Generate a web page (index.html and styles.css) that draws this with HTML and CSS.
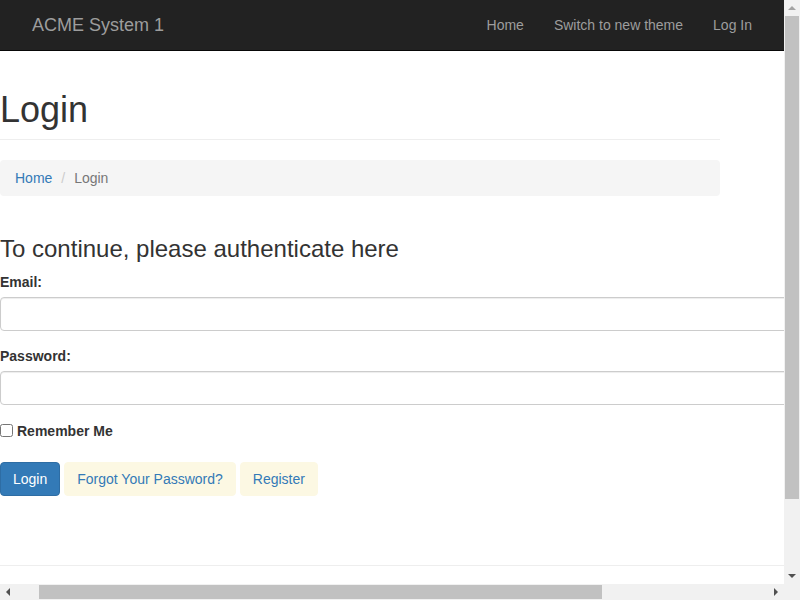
FILE: index.html
```html
<!DOCTYPE html>
<html lang="en">
<head>
<meta charset="utf-8">
<title>Login - ACME System 1</title>
<link rel="stylesheet" href="styles.css">
</head>
<body>
<nav class="navbar">
  <a class="brand" href="#">ACME System 1</a>
  <ul class="nav">
    <li><a href="#">Home</a></li>
    <li><a href="#">Switch to new theme</a></li>
    <li><a href="#">Log In</a></li>
  </ul>
</nav>
<main class="page">
  <h1 class="page-title">Login</h1>
  <ol class="breadcrumb">
    <li><a href="#">Home</a></li>
    <li class="active">Login</li>
  </ol>
  <form class="login-form">
    <h3 class="form-title">To continue, please authenticate here</h3>
    <div class="form-group email-group">
      <label class="field-label" for="email">Email:</label>
      <input class="form-control" id="email" type="email">
    </div>
    <div class="form-group password-group">
      <label class="field-label" for="password">Password:</label>
      <input class="form-control" id="password" type="password">
    </div>
    <label class="remember"><input type="checkbox" class="check"><span>Remember Me</span></label>
    <div class="actions">
      <button type="button" class="btn btn-primary">Login</button>
      <a class="btn btn-soft" href="#">Forgot Your Password?</a>
      <a class="btn btn-soft" href="#">Register</a>
    </div>
  </form>
  <footer class="footer"></footer>
</main>
<div class="vscroll" aria-hidden="true">
  <span class="arrow arrow-up"></span>
  <span class="vthumb"></span>
  <span class="arrow arrow-down"></span>
</div>
<div class="hscroll" aria-hidden="true">
  <span class="arrow arrow-left"></span>
  <span class="hthumb"></span>
  <span class="arrow arrow-right"></span>
</div>
<div class="scroll-corner" aria-hidden="true"></div>
</body>
</html>
```
FILE: styles.css
```css
* { box-sizing: border-box; }
html { overflow: hidden; }
html, body { margin: 0; padding: 0; }
body {
  font-family: "Liberation Sans", Arial, Helvetica, sans-serif;
  font-size: 14px;
  line-height: 20px;
  color: #333;
  background: #fff;
}
a { color: #337ab7; text-decoration: none; }

.navbar {
  position: fixed;
  top: 0; left: 0; right: 16px;
  z-index: 10;
  height: 51px;
  background: #222;
  border-bottom: 1px solid #080808;
  display: flex;
  align-items: flex-start;
  justify-content: space-between;
  padding: 0 17px;
}
.brand {
  display: block;
  padding: 15px;
  font-size: 18px;
  line-height: 20px;
  color: #9d9d9d;
}
.nav {
  display: flex;
  list-style: none;
  margin: 0;
  padding: 0;
}
.nav a {
  display: block;
  padding: 15px;
  line-height: 20px;
  color: #9d9d9d;
}

.page {
  width: 1015px;
  padding: 90px 15px 101px 0;
  display: flex;
  flex-direction: column;
  align-items: flex-start;
}
.page-title {
  width: 720px;
  margin: 0;
  font-size: 36px;
  line-height: 40px;
  font-weight: 500;
  padding-bottom: 9px;
  border-bottom: 1px solid #eee;
}
.breadcrumb {
  width: 720px;
  margin: 20px 0 0;
  padding: 8px 15px;
  list-style: none;
  background: #f5f5f5;
  border-radius: 4px;
  display: flex;
}
.breadcrumb li + li { margin-left: 4px; }
.breadcrumb li + li::before {
  content: "/\00a0";
  padding: 0 5px;
  color: #ccc;
}
.breadcrumb .active { color: #777; }

.login-form {
  width: 1000px;
  margin-top: 40px;
  display: flex;
  flex-direction: column;
}
.form-title {
  margin: 0;
  font-size: 24px;
  line-height: 26px;
  font-weight: 500;
}
.form-group { display: flex; flex-direction: column; align-items: flex-start; }
.email-group { margin-top: 10px; }
.password-group { margin-top: 15px; }
.field-label {
  font-weight: bold;
  margin-bottom: 5px;
}
.form-control {
  width: 100%;
  height: 34px;
  padding: 6px 12px;
  font: inherit;
  color: #555;
  background: #fff;
  border: 1px solid #ccc;
  border-radius: 4px;
  box-shadow: inset 0 1px 1px rgba(0,0,0,.075);
}
.remember {
  margin-top: 16px;
  display: flex;
  align-items: flex-start;
  gap: 4px;
  font-weight: bold;
}
.check {
  margin: 3px 0 0;
  width: 13px;
  height: 13px;
}
.actions {
  margin-top: 21px;
  display: flex;
  gap: 4px;
}
.btn {
  display: inline-block;
  padding: 6px 12px;
  font: inherit;
  font-size: 14px;
  line-height: 20px;
  border: 1px solid transparent;
  border-radius: 4px;
  cursor: pointer;
}
.btn-primary {
  color: #fff;
  background: #337ab7;
  border-color: #2e6da4;
}
.btn-soft {
  color: #337ab7;
  background: #fcf8e3;
  border-color: #fcf8e3;
}
.footer {
  width: 1000px;
  margin-top: 69px;
  border-top: 1px solid #eee;
}

/* browser scrollbars */
.vscroll {
  position: fixed;
  top: 0; right: 0;
  width: 16px; height: 584px;
  background: #f1f1f1;
  z-index: 20;
  display: flex;
  flex-direction: column;
  align-items: center;
}
.vthumb {
  width: 14px;
  height: 483px;
  background: #c1c1c1;
}
.hscroll {
  position: fixed;
  left: 0; bottom: 0;
  width: 784px; height: 16px;
  background: #f1f1f1;
  z-index: 20;
  display: flex;
  align-items: center;
}
.hthumb {
  width: 563px;
  height: 14px;
  margin-left: 23px;
  background: #c1c1c1;
}
.scroll-corner {
  position: fixed;
  right: 0; bottom: 0;
  width: 16px; height: 16px;
  background: #f1f1f1;
  z-index: 20;
}
.arrow {
  width: 16px;
  height: 16px;
  flex: none;
  position: relative;
}
.arrow::after {
  content: "";
  position: absolute;
  width: 0; height: 0;
}
.arrow-up::after {
  left: 4px; top: 6px;
  border-left: 4px solid transparent;
  border-right: 4px solid transparent;
  border-bottom: 4px solid #a3a3a3;
}
.arrow-down { margin-top: auto; }
.arrow-down::after {
  left: 4px; top: 6px;
  border-left: 4px solid transparent;
  border-right: 4px solid transparent;
  border-top: 4px solid #505050;
}
.arrow-left::after {
  left: 6px; top: 4px;
  border-top: 4px solid transparent;
  border-bottom: 4px solid transparent;
  border-right: 4px solid #505050;
}
.arrow-right { margin-left: auto; }
.arrow-right::after {
  left: 6px; top: 4px;
  border-top: 4px solid transparent;
  border-bottom: 4px solid transparent;
  border-left: 4px solid #505050;
}
```
